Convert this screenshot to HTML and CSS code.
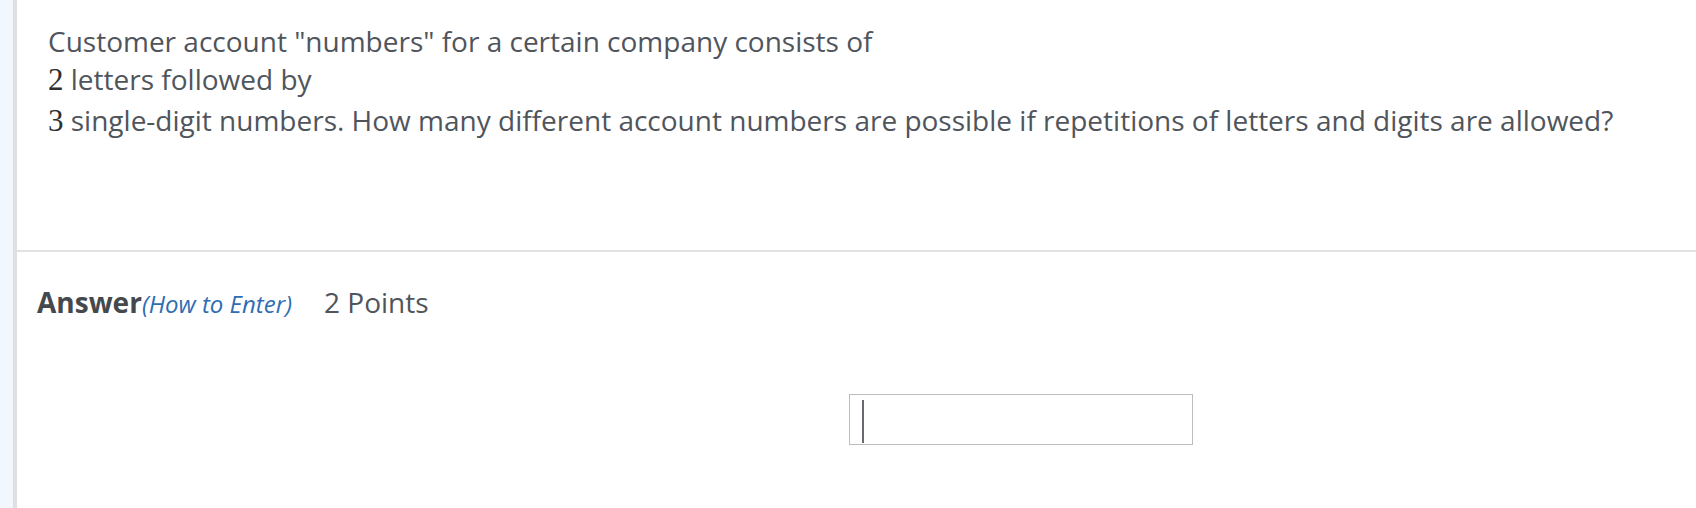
FILE: index.html
```html
<!DOCTYPE html>
<html>
<head>
<meta charset="utf-8">
<link rel="stylesheet" href="styles.css">
</head>
<body>
<div class="page">
  <div class="stripe"></div>
  <div class="main">
    <section class="question">
      <p class="qtext">Customer account "numbers" for a certain company consists of<br><span class="num">2</span> letters followed by<br><span class="num num-last">3</span> single-digit numbers. How many different account numbers are possible if repetitions of letters and digits are allowed?</p>
    </section>
    <section class="answer">
      <div class="answer-head">
        <span class="answer-label">Answer</span><a class="howto">(How to Enter)</a>
        <span class="points">2 Points</span>
      </div>
      <div class="answer-field">
        <div class="input"><span class="caret"></span></div>
      </div>
    </section>
  </div>
</div>
</body>
</html>
```
FILE: styles.css
```css
html, body {
  margin: 0;
  padding: 0;
  background: #ffffff;
}
.page {
  display: flex;
  min-height: 508px;
  font-family: "Open Sans", "Liberation Sans", sans-serif;
  color: #50555c;
}
.stripe {
  width: 13px;
  flex: none;
  background: #f2f6fd;
  border-right: 4px solid #e0e0e0;
}
.main {
  flex: 1;
}
.question {
  height: 252px;
  border-bottom: 2px solid #e2e2e2;
  box-sizing: border-box;
  padding: 22px 0 0 31px;
}
.qtext {
  margin: 0;
  font-size: 28px;
  line-height: 38px;
}
.num {
  font-family: "Liberation Serif", "DejaVu Serif", serif;
  font-size: 31px;
  color: #2f2f2f;
}
.num-last {
  display: inline-block;
  padding-top: 3px;
}
.answer {
  padding: 32px 0 0 20px;
}
.answer-head {
  display: flex;
  align-items: baseline;
  line-height: 36px;
}
.answer-label {
  font-weight: 700;
  font-size: 28px;
  color: #45494e;
}
.howto {
  font-style: italic;
  font-size: 24px;
  color: #2f6db3;
}
.points {
  font-size: 28px;
  margin-left: 32px;
}
.answer-field {
  padding: 72px 0 0 812px;
}
.input {
  box-sizing: border-box;
  width: 344px;
  height: 51px;
  border: 1px solid #bdbdbd;
  display: flex;
  align-items: flex-start;
  padding: 5px 0 0 12px;
}
.caret {
  width: 2px;
  height: 43px;
  background: #666a70;
}
```
